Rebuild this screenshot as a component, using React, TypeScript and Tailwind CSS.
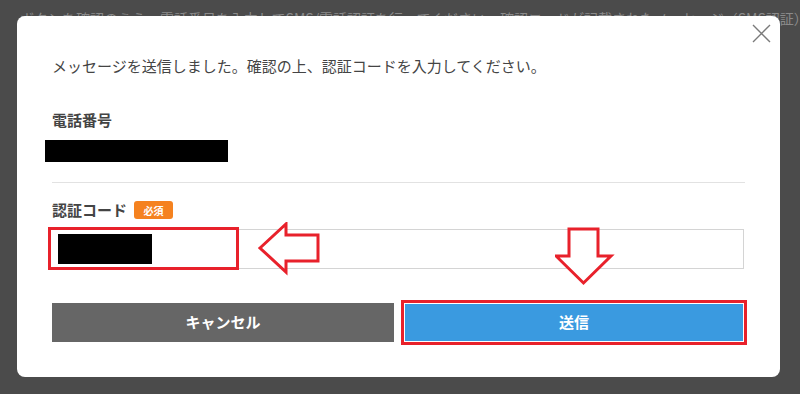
import React from 'react';

const font = { fontFamily: '"Noto Sans CJK JP", "Noto Sans", sans-serif' };

const LeftArrow = () => (
  <svg width="64" height="54" viewBox="0 0 64 54" className="shrink-0">
    <polygon
      points="2,26 28,2 28,13 60,13 60,39 28,39 28,50"
      fill="white"
      stroke="#e8212b"
      strokeWidth="3"
      strokeLinejoin="miter"
    />
  </svg>
);

const DownArrow = () => (
  <svg width="60" height="60" viewBox="0 0 60 60">
    <polygon
      points="14,2 43,2 43,29 56,29 28.5,56 1,29 14,29"
      fill="white"
      stroke="#e8212b"
      strokeWidth="3"
    />
  </svg>
);

export default function App() {
  return (
    <div className="relative h-[394px] w-[800px] overflow-hidden bg-[#4b4b4b]" style={font}>
      <p className="whitespace-nowrap pl-[20px] pt-[8px] text-[14px] text-[#8a8a8a]">
        ボタンを確認のうえ、電話番号を入力してSMS/電話認証を行ってください。確認コードが記載されたメッセージ（SMS認証）
      </p>

      <div className="absolute left-[17px] top-[16px] h-[361px] w-[763px] rounded-[8px] bg-white">
        <button className="absolute right-[9px] top-[8px] p-0">
          <svg width="19" height="19" viewBox="0 0 19 19">
            <path d="M1 1 L18 18 M18 1 L1 18" stroke="#7a7a7a" strokeWidth="1.4" />
          </svg>
        </button>

        <div className="flex flex-col pl-[35px] pr-[33px]">
          <p className="mt-[40px] text-[15px] leading-[20px] text-[#444]">
            メッセージを送信しました。確認の上、認証コードを入力してください。
          </p>

          <p className="mt-[34px] text-[15px] font-bold leading-[20px] text-[#444]">電話番号</p>
          <div className="ml-[-7px] mt-[10px] h-[22px] w-[183px] bg-black" />

          <div className="mr-[2px] mt-[20px] h-px bg-[#e2e2e2]" />

          <div className="mt-[17px] flex items-center gap-[7px]">
            <span className="text-[15px] font-bold leading-[20px] text-[#444]">認証コード</span>
            <span className="flex h-[18px] w-[39px] items-center justify-center rounded-[3px] bg-[#f5821f] text-[10px] font-bold text-white">
              必須
            </span>
          </div>

          <div className="relative mr-[3px] mt-[9px] h-[40px] border border-[#d4d4d4]">
            <div className="absolute left-[-5px] top-[-3px] flex h-[43px] w-[191px] items-center border-[3px] border-[#e8212b] bg-white pl-[7px]">
              <div className="h-[30px] w-[94px] bg-black" />
            </div>
            <div className="absolute left-[205px] top-[-8px]">
              <LeftArrow />
            </div>
            <div className="absolute left-[502px] top-[-3px]">
              <DownArrow />
            </div>
          </div>

          <div className="mt-[34px] flex gap-[7px]">
            <button className="h-[39px] w-[342px] shrink-0 bg-[#666666] text-[15px] font-bold text-white">
              キャンセル
            </button>
            <div className="-mt-[3px] shrink-0 border-[3px] border-[#e8212b] p-px">
              <button className="h-[37px] w-[338px] bg-[#3a9ae0] text-[15px] font-bold text-white">
                送信
              </button>
            </div>
          </div>
        </div>
      </div>
    </div>
  );
}
